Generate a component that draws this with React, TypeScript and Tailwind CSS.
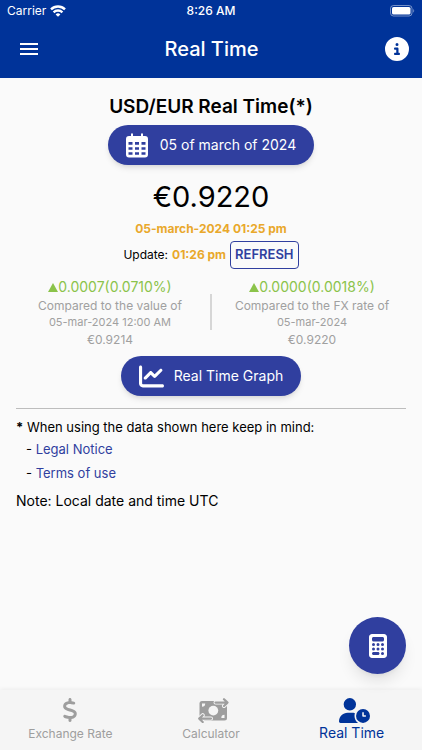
import React from 'react'
import { FaCalculator, FaChartLine, FaCircleInfo, FaDollarSign, FaUserClock } from 'react-icons/fa6'

const comparisons = [
  {
    id: 'value',
    change: '0.0007(0.0710%)',
    label: 'Compared to the value of',
    date: '05-mar-2024 12:00 AM',
    rate: '€0.9214',
  },
  {
    id: 'fx',
    change: '0.0000(0.0018%)',
    label: 'Compared to the FX rate of',
    date: '05-mar-2024',
    rate: '€0.9220',
  },
]

function WifiIcon() {
  return (
    <svg viewBox="0 0 16 12" className="h-3 w-4" fill="none" stroke="currentColor" strokeWidth="2.4" aria-hidden="true">
      <path d="M1 4.4a10 10 0 0 1 14 0" />
      <path d="M3.600 7.300a6.200 6.200 0 0 1 8.800 0" />
      <path d="M8 11.800 5.600 9.400a3.400 3.400 0 0 1 4.800 0z" fill="currentColor" stroke="none" />
    </svg>
  )
}

function BatteryIcon() {
  return (
    <svg viewBox="0 0 25 12" className="h-3 w-[25px]" aria-hidden="true">
      <rect x="0.5" y="0.5" width="21.5" height="10.5" rx="3" fill="none" stroke="#fff" strokeOpacity="0.45" />
      <rect x="2" y="2" width="18.5" height="7.5" rx="1.6" fill="#fff" />
      <path d="M23.3 4v3.6c1.2-.5 1.2-3.1 0-3.6z" fill="#fff" fillOpacity="0.5" />
    </svg>
  )
}

function CalendarIcon() {
  return (
    <svg viewBox="0 0 22 25" className="h-[25px] w-[22px]" aria-hidden="true">
      <path d="M6 1.300v4M16 1.300v4" stroke="currentColor" strokeWidth="2" strokeLinecap="round" />
      <path
        fill="currentColor"
        fillRule="evenodd"
        d="M3 3h16a3 3 0 0 1 3 3v15.500a3 3 0 0 1-3 3H3a3 3 0 0 1-3-3V6a3 3 0 0 1 3-3zM2.500 9v2.700h4V9zm6.500 0v2.700h4V9zm6.500 0v2.700h4V9zM2.500 14.200v2.500h4v-2.500zm6.500 0v2.500h4v-2.500zm6.500 0v2.500h4v-2.500zM2.500 19.200v2.500h4v-2.500zm6.500 0v2.500h4v-2.500zm6.500 0v2.500h4v-2.500z"
      />
    </svg>
  )
}

function MoneyTransferIcon() {
  const arrows = 'M17.500 4.600H29.500M26 1.200l3.500 3.400L26 8M13 20.600H1.200M4.700 17.200l-3.500 3.400L4.700 24'
  return (
    <svg
      viewBox="0 0 31 25"
      className="ml-1.5 h-[25px] w-[31px]"
      fill="none"
      strokeLinecap="round"
      strokeLinejoin="round"
      aria-hidden="true"
    >
      <rect x="1.500" y="3" width="27.500" height="19.500" rx="2.500" fill="currentColor" />
      <circle cx="15.300" cy="12.600" r="4.900" fill="#f5f5f5" />
      <path d="M4 5.500h3.200A3.200 3.200 0 0 1 4 8.700zM26.500 20h-3.200a3.200 3.200 0 0 1 3.200-3.200z" fill="#f5f5f5" />
      <path d={arrows} stroke="#f5f5f5" strokeWidth="4" />
      <path d={arrows} stroke="currentColor" strokeWidth="2.2" />
    </svg>
  )
}

function App() {
  return (
    <div className="flex min-h-screen flex-col bg-[#fafafa] font-['Inter','Liberation_Sans',sans-serif] text-black">
      <header className="bg-[#003399] text-white">
        <div className="grid h-[22px] grid-cols-3 items-center px-[7px] text-xs">
          <div className="flex items-center gap-1">
            <span>Carrier</span>
            <WifiIcon />
          </div>
          <span className="text-center font-medium">8:26 AM</span>
          <div className="flex justify-end">
            <BatteryIcon />
          </div>
        </div>
        <div className="flex h-14 items-center justify-between pr-[13px] pb-0.5 pl-5">
          <button type="button" aria-label="Menu" className="flex w-[18px] flex-col gap-[3px]">
            <span className="h-0.5 w-full bg-white" />
            <span className="h-0.5 w-full bg-white" />
            <span className="h-0.5 w-full bg-white" />
          </button>
          <h1 className="text-xl font-medium">Real Time</h1>
          <button type="button" aria-label="Information">
            <FaCircleInfo className="size-6" />
          </button>
        </div>
      </header>

      <main className="flex flex-col px-4 pt-[15px]">
        <section className="flex flex-col items-center">
          <h2 className="text-[19px] leading-7 font-semibold">USD/EUR Real Time(*)</h2>
          <button
            type="button"
            className="mt-1 flex h-10 items-center gap-3 rounded-full bg-[#303f9f] px-[18px] text-sm text-white shadow-md"
          >
            <CalendarIcon />
            05 of march of 2024
          </button>
          <p className="mt-3 text-[29px] leading-10">€0.9220</p>
          <p className="mt-1 text-xs font-bold text-[#e9a82b]">05-march-2024 01:25 pm</p>
          <div className="mt-1 flex items-center gap-1 text-xs">
            <span>Update:</span>
            <span className="font-bold text-[#e9a82b]">01:26 pm</span>
            <button
              type="button"
              className="h-7 rounded-sm border border-[#303f9f] px-1 text-[13px] font-semibold text-[#303f9f]"
            >
              REFRESH
            </button>
          </div>
        </section>

        <section className="mt-2 grid grid-cols-2 gap-3.5 text-center text-[#a0a0a0]">
          {comparisons.map((item, index) => (
            <div key={item.id} className="relative">
              <p className="flex items-center justify-center text-sm leading-5 text-[#8bc34a]">
                <svg viewBox="0 0 10 9" className="h-[9px] w-2.5" aria-hidden="true">
                  <path d="M5 0l5 9H0z" fill="currentColor" />
                </svg>
                {item.change}
              </p>
              <p className="text-xs leading-[17px]">{item.label}</p>
              <p className="text-[11px] leading-[17px]">{item.date}</p>
              <p className="text-xs leading-[17px]">{item.rate}</p>
              {index === 0 && <span className="absolute top-[17px] -right-2 h-9 w-0.5 bg-[#d6d6d6]" />}
            </div>
          ))}
        </section>

        <button
          type="button"
          className="mt-2 flex h-10 items-center gap-2.5 self-center rounded-full bg-[#303f9f] px-[18px] text-sm text-white shadow-md"
        >
          <FaChartLine className="size-[25px]" />
          Real Time Graph
        </button>

        <hr className="mt-3 border-[#bdbdbd]" />

        <section className="mt-2 text-[13px]">
          <p className="leading-5">
            <b>*</b> When using the data shown here keep in mind:
          </p>
          <ul className="pl-2.5 leading-6">
            <li>
              - <a href="#legal" className="text-[#303f9f]">Legal Notice</a>
            </li>
            <li>
              - <a href="#terms" className="text-[#303f9f]">Terms of use</a>
            </li>
          </ul>
          <p className="mt-1 text-sm leading-6">Note: Local date and time UTC</p>
        </section>
      </main>

      <button
        type="button"
        aria-label="Open calculator"
        className="fixed right-4 bottom-[76px] flex size-[57px] items-center justify-center rounded-full bg-[#303f9f] text-white shadow-lg"
      >
        <FaCalculator className="size-6" />
      </button>

      <nav className="mt-auto grid h-[60px] grid-cols-3 bg-[#f5f5f5] text-center text-xs text-[#9e9e9e] shadow-[0_-1px_4px_rgba(0,0,0,0.06)]">
        <a href="#exchange" className="flex flex-col items-center gap-1 pt-2">
          <FaDollarSign className="size-6" />
          Exchange Rate
        </a>
        <a href="#calculator" className="flex flex-col items-center gap-[3px] pt-2">
          <MoneyTransferIcon />
          Calculator
        </a>
        <a href="#realtime" aria-current="page" className="flex flex-col items-center pt-2 text-sm text-[#003399]">
          <FaUserClock className="ml-1.5 h-[25px] w-[31px]" />
          Real Time
        </a>
      </nav>
    </div>
  )
}

export default App
